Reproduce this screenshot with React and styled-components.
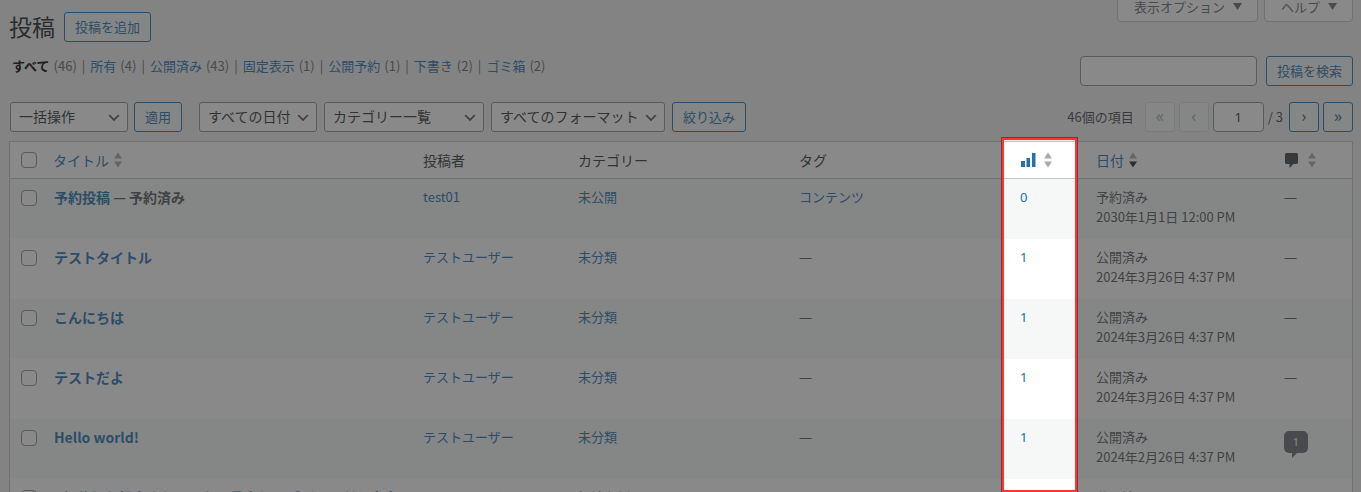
import React from 'react'
import styled, { createGlobalStyle } from 'styled-components'

const GlobalStyle = createGlobalStyle`
  * {
    box-sizing: border-box;
  }

  body {
    margin: 0;
    background: #f0f0f1;
    color: #3c434a;
    font-family: "Noto Sans CJK JP", "Noto Sans", sans-serif;
    font-size: 13px;
    line-height: 20px;
  }

  button, input, select {
    font-family: inherit;
  }
`

const Page = styled.div`
  position: relative;
  height: 100vh;
  overflow: hidden;
  padding: 0 8px 0 9px;
`

const Row = styled.div`
  display: flex;
  justify-content: space-between;
  align-items: flex-start;
`

const Heading = styled.div`
  display: flex;
  align-items: flex-start;
  gap: 9px;
  padding-top: 12px;
`

const Title = styled.h1`
  margin: 0;
  font-size: 23px;
  font-weight: 400;
  line-height: 28px;
  color: #1d2327;
`

const Button = styled.button`
  height: 30px;
  padding: 0 10px;
  border: 1px solid #2271b1;
  border-radius: 3px;
  background: #f6f7f7;
  color: #2271b1;
  font-size: 13px;
  line-height: 28px;
  white-space: nowrap;
`

const PageButton = styled(Button)`
  width: 30px;
  padding: 0 0 2px;
  font-family: "Noto Sans", sans-serif;
  font-size: 16px;
  line-height: 26px;

  &:disabled {
    border-color: #dcdcde;
    color: #a7aaad;
  }
`

const ScreenTabs = styled.div`
  display: flex;
  align-items: flex-end;
  gap: 6px;
  height: 22px;
`

const ScreenTab = styled.button`
  display: flex;
  align-items: center;
  gap: 7px;
  height: 32px;
  padding: 0 14px 0 16px;
  border: 1px solid #c3c4c7;
  border-radius: 0 0 4px 4px;
  background: #fff;
  color: #646970;
  font-size: 13px;
`

const SubRow = styled(Row)`
  padding-top: 14px;
`

const Filters = styled.ul`
  display: flex;
  margin: 0;
  padding: 0 0 0 3px;
  list-style: none;
  color: #646970;

  li + li::before {
    content: "|";
    margin: 0 5px;
  }

  span {
    margin-left: 4px;
  }
`

const Link = styled.a`
  color: ${props => (props.$current ? '#000' : '#2271b1')};
  font-weight: ${props => (props.$strong || props.$current ? '700' : '400')};
  text-decoration: none;
`

const Search = styled.form`
  display: flex;
  gap: 9px;
`

const TextInput = styled.input`
  width: ${props => props.$width};
  height: 30px;
  padding: 0 8px;
  border: 1px solid #8c8f94;
  border-radius: 4px;
  background: #fff;
  color: #2c3338;
  font-family: "Noto Sans", sans-serif;
  font-size: 13px;
  text-align: ${props => (props.$center ? 'center' : 'left')};
`

const Toolbar = styled(Row)`
  padding: 16px 0 9px 1px;
`

const Group = styled.div`
  display: flex;
  align-items: center;
  gap: ${props => props.$gap || '6px'};
`

const Count = styled.span`
  margin-right: 7px;
`

const Total = styled.span`
  margin-right: 2px;
`

const SelectBox = styled.select`
  width: ${props => props.$width};
  height: 30px;
  padding: 0 24px 2px 8px;
  border: 1px solid #8c8f94;
  border-radius: 3px;
  appearance: none;
  background: #fff url('data:image/svg+xml;utf8,<svg xmlns="http://www.w3.org/2000/svg" viewBox="0 0 20 20"><path d="M5 6l5 5 5-5 2 1-7 7-7-7 2-1z" fill="%23555"/></svg>') no-repeat right 5px top 55%;
  background-size: 16px 16px;
  color: #2c3338;
  font-size: 14px;
`

const Table = styled.table`
  width: 100%;
  table-layout: fixed;
  border: 1px solid #c3c4c7;
  border-spacing: 0;
  background: #fff;
`

const Col = styled.col`
  width: ${props => props.$width};
`

const HeadCell = styled.th`
  height: 37px;
  padding: 0 10px;
  border-bottom: 1px solid #c3c4c7;
  color: #2c3338;
  font-size: 14px;
  font-weight: 400;
  text-align: left;
`

const SortLink = styled.a`
  display: flex;
  align-items: center;
  gap: ${props => props.$gap || '5px'};
  color: #2271b1;
  text-decoration: none;
`

const BodyRow = styled.tr`
  background: ${props => (props.$striped ? '#f6f7f7' : '#fff')};
`

const Cell = styled.td`
  padding: 8px 10px 12px;
  height: 60px;
  vertical-align: top;
  color: #50575e;
  white-space: nowrap;
`

const StatCell = styled(Cell)`
  font-family: "Noto Sans", sans-serif;
`

const TitleCell = styled(Cell)`
  padding-left: 11px;
  font-size: 14px;
  font-weight: 700;
`

const Latin = styled.span`
  font-family: "Noto Sans", sans-serif;
`

const Check = styled.input`
  display: block;
  width: 16px;
  height: 16px;
  margin: ${props => (props.$head ? '0' : '3px 0 0')} 1px;
  border: 1px solid #8c8f94;
  border-radius: 4px;
  appearance: none;
  background: #fff;
`

const Bubble = styled.a`
  position: relative;
  display: block;
  width: 24px;
  height: 22px;
  margin-top: 4px;
  border-radius: 5px;
  background: #646970;
  color: #fff;
  font-family: "Noto Sans", sans-serif;
  font-size: 11px;
  line-height: 22px;
  text-align: center;
  text-decoration: none;

  &::after {
    content: "";
    position: absolute;
    top: 22px;
    left: 8px;
    border-top: 5px solid #646970;
    border-right: 5px solid transparent;
  }
`

const Spotlight = styled.div`
  position: absolute;
  top: 138px;
  right: 284px;
  bottom: 0;
  width: 75px;
  border: 2px solid #ff3333;
  box-shadow: 0 0 0 1px #8a2f2f, 0 0 0 9999px rgba(51, 51, 51, 0.58);
  pointer-events: none;
`

const SortIcon = ({ desc }) => (
  <svg width="8" height="16" viewBox="0 0 8 16">
    <path d="M4 0.5L8 6.5H0z" fill="#a7aaad" />
    <path d="M0 9.5h8L4 15.5z" fill={desc ? '#1d2327' : '#a7aaad'} />
  </svg>
)

const Triangle = () => (
  <svg width="11" height="8" viewBox="0 0 11 8">
    <path d="M1 1h9L5.500 8z" fill="#646970" />
  </svg>
)

const ChartIcon = () => (
  <svg width="16" height="16" viewBox="0 0 16 16">
    <path d="M1 9h4v6H1zM6.500 6H10v9H6.500zM12 1h3.500v14H12z" fill="#2271b1" />
  </svg>
)

const CommentIcon = () => (
  <svg width="14" height="16" viewBox="0 0 14 16">
    <path d="M2 1h11l1 1v9l-1 1H9.500L5.500 16v-4H2l-1-1V2z" fill="#3c434a" />
  </svg>
)

const filters = [
  ['すべて', 46],
  ['所有', 4],
  ['公開済み', 43],
  ['固定表示', 1],
  ['公開予約', 1],
  ['下書き', 2],
  ['ゴミ箱', 2],
]

const posts = [
  { title: '予約投稿', state: '予約済み', author: 'test01', category: '未公開', tag: 'コンテンツ', views: 0, status: '予約済み', date: '2030年1月1日 12:00 PM' },
  { title: 'テストタイトル', author: 'テストユーザー', category: '未分類', views: 1, status: '公開済み', date: '2024年3月26日 4:37 PM' },
  { title: 'こんにちは', author: 'テストユーザー', category: '未分類', views: 1, status: '公開済み', date: '2024年3月26日 4:37 PM' },
  { title: 'テストだよ', author: 'テストユーザー', category: '未分類', views: 1, status: '公開済み', date: '2024年3月26日 4:37 PM' },
  { title: 'Hello world!', author: 'テストユーザー', category: '未分類', views: 1, status: '公開済み', date: '2024年2月26日 4:37 PM', comments: 1 },
  { title: '1行分しか想定されていない見出しのデザインだと文章', author: 'テストユーザー', category: '極端な例', views: 1, status: '公開済み', date: '2024年2月26日 4:37 PM' },
]

const Select = ({ label, width }) => (
  <SelectBox $width={width} aria-label={label}>
    <option>{label}</option>
  </SelectBox>
)

const Post = ({ post, striped }) => (
  <BodyRow $striped={striped}>
    <Cell><Check type="checkbox" aria-label={`${post.title}を選択`} /></Cell>
    <TitleCell>
      <Link href="#" $strong>{post.title}</Link>
      {post.state && ` — ${post.state}`}
    </TitleCell>
    <Cell><Link href="#">{post.author}</Link></Cell>
    <Cell><Link href="#">{post.category}</Link></Cell>
    <Cell>{post.tag ? <Link href="#">{post.tag}</Link> : <Latin>—</Latin>}</Cell>
    <StatCell><Link href="#">{post.views}</Link></StatCell>
    <Cell>{post.status}<br />{post.date}</Cell>
    <Cell>{post.comments ? <Bubble href="#">{post.comments}</Bubble> : <Latin>—</Latin>}</Cell>
  </BodyRow>
)

const App = () => (
  <Page>
    <GlobalStyle />
    <Row>
      <Heading>
        <Title>投稿</Title>
        <Button>投稿を追加</Button>
      </Heading>
      <ScreenTabs>
        <ScreenTab>表示オプション <Triangle /></ScreenTab>
        <ScreenTab>ヘルプ <Triangle /></ScreenTab>
      </ScreenTabs>
    </Row>

    <SubRow>
      <Filters>
        {filters.map(([name, count], i) => (
          <li key={name}><Link href="#" $current={i === 0}>{name}</Link><span>({count})</span></li>
        ))}
      </Filters>
      <Search>
        <TextInput type="search" aria-label="投稿を検索" $width="177px" />
        <Button type="button">投稿を検索</Button>
      </Search>
    </SubRow>

    <Toolbar>
      <Group $gap="17px">
        <Group>
          <Select label="一括操作" width="118px" />
          <Button>適用</Button>
        </Group>
        <Group $gap="7px">
          <Select label="すべての日付" width="118px" />
          <Select label="カテゴリー一覧" width="160px" />
          <Select label="すべてのフォーマット" width="174px" />
          <Button>絞り込み</Button>
        </Group>
      </Group>
      <Group $gap="4px">
        <Count>46個の項目</Count>
        <PageButton disabled>«</PageButton>
        <PageButton disabled>‹</PageButton>
        <TextInput type="text" aria-label="現在のページ" defaultValue="1" $width="51px" $center />
        <Total>/ 3</Total>
        <PageButton>›</PageButton>
        <PageButton>»</PageButton>
      </Group>
    </Toolbar>

    <Table>
      <colgroup>
        <Col $width="33px" />
        <Col />
        <Col $width="155px" />
        <Col $width="221px" />
        <Col $width="221px" />
        <Col $width="76px" />
        <Col $width="188px" />
        <Col $width="78px" />
      </colgroup>
      <thead>
        <tr>
          <HeadCell><Check $head type="checkbox" aria-label="すべて選択" /></HeadCell>
          <HeadCell><SortLink href="#">タイトル <SortIcon /></SortLink></HeadCell>
          <HeadCell>投稿者</HeadCell>
          <HeadCell>カテゴリー</HeadCell>
          <HeadCell>タグ</HeadCell>
          <HeadCell><SortLink href="#" $gap="8px" aria-label="閲覧数"><ChartIcon /><SortIcon /></SortLink></HeadCell>
          <HeadCell><SortLink href="#">日付 <SortIcon desc /></SortLink></HeadCell>
          <HeadCell><SortLink href="#" $gap="10px" aria-label="コメント"><CommentIcon /><SortIcon /></SortLink></HeadCell>
        </tr>
      </thead>
      <tbody>
        {posts.map((post, i) => (
          <Post key={post.title} post={post} striped={i % 2 === 0} />
        ))}
      </tbody>
    </Table>
    <Spotlight />
  </Page>
)

export default App
